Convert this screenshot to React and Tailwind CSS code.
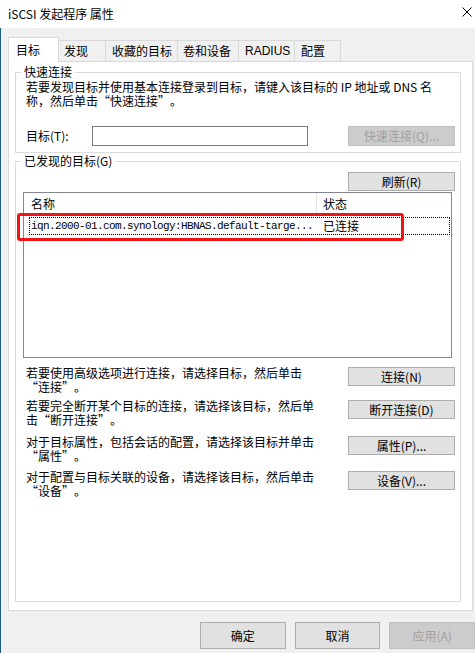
import React from 'react';

const Btn = ({ children, disabled }) => (
  <div
    className={
      disabled
        ? 'w-[107px] h-[20px] flex items-center justify-center border border-[#bfbfbf] bg-[#cccccc] text-[12px] leading-none text-[#a0a0a0]'
        : 'w-[107px] h-[19px] flex items-center justify-center border border-[#adadad] bg-[#e1e1e1] text-[12px] leading-none text-black'
    }
  >
    {children}
  </div>
);

const DlgBtn = ({ children, disabled }) => (
  <div
    className={
      disabled
        ? 'w-[86px] h-[27px] flex items-center justify-center border border-[#bfbfbf] bg-[#cccccc] text-[12px] text-[#a0a0a0]'
        : 'w-[86px] h-[27px] flex items-center justify-center border border-[#adadad] bg-[#e1e1e1] text-[12px] text-black'
    }
  >
    {children}
  </div>
);

const actions = [
  { lines: ['若要使用高级选项进行连接，请选择目标，然后单击', '“连接”。'], btn: '连接(N)', mt: 'mt-[8px]' },
  { lines: ['若要完全断开某个目标的连接，请选择该目标，然后单', '击“断开连接”。'], btn: '断开连接(D)', mt: 'mt-[5px]' },
  { lines: ['对于目标属性，包括会话的配置，请选择该目标并单击', '“属性”。'], btn: '属性(P)...', mt: 'mt-[8px]' },
  { lines: ['对于配置与目标关联的设备，请选择该目标，然后单击', '“设备”。'], btn: '设备(V)...', mt: 'mt-[7px]' },
];

export default function App() {
  return (
    <div
      lang="zh-CN"
      className="w-[475px] h-[653px] overflow-hidden bg-[#f0f0f0] text-black font-['Noto_Sans_CJK_SC','Liberation_Sans',sans-serif] [text-spacing-trim:space-all] flex flex-col"
    >
      {/* Title bar */}
      <div className="h-[28px] shrink-0 bg-white flex items-center justify-between pl-[8px] pr-[3px]">
        <span className="text-[12px] leading-none">iSCSI 发起程序 属性</span>
        <svg width="10" height="10" viewBox="0 0 10 10" className="mb-[4px]">
          <path d="M0.5 0.5 L9.5 9.5 M9.5 0.5 L0.5 9.5" stroke="#000" strokeWidth="1" fill="none" />
        </svg>
      </div>

      <div className="flex-1 border-l border-[#1b5e80] flex flex-col">
        {/* Tabs */}
        <div className="flex items-end h-[24px] mt-[9px] ml-[7px] text-[12px] leading-none">
          <div className="relative z-10 -mb-px h-[25px] w-[51px] bg-white border-l border-t border-r border-[#d9d9d9] flex items-center pl-[7px]">目标</div>
          <div className="h-[21px] w-[46px] border-t border-[#d9d9d9] flex items-center pl-[5px]">发现</div>
          <div className="h-[21px] w-[72px] border-t border-l border-[#d9d9d9] flex items-center pl-[6px]">收藏的目标</div>
          <div className="h-[21px] w-[61px] border-t border-l border-[#d9d9d9] flex items-center pl-[5px]">卷和设备</div>
          <div className="h-[21px] w-[56px] border-t border-l border-[#d9d9d9] flex items-center pl-[6px] font-['Liberation_Sans',sans-serif]">RADIUS</div>
          <div className="h-[21px] w-[47px] border-t border-l border-r border-[#d9d9d9] flex items-center pl-[6px]">配置</div>
        </div>

        {/* Tab panel */}
        <div className="ml-[7px] w-[465px] h-[550px] shrink-0 border border-[#d9d9d9] bg-white pt-[2px] text-[12px]">
          {/* Quick connect */}
          <fieldset className="ml-[6px] w-[446px] border border-[#dcdcdc] pb-[6px]">
            <legend className="ml-[5px] px-[3px] leading-[16px]">快速连接</legend>
            <p className="pl-[10px] leading-[14px] whitespace-nowrap">
              若要发现目标并使用基本连接登录到目标，请键入该目标的 IP 地址或 DNS 名
              <br />
              称，然后单击“快速连接”。
            </p>
            <div className="mt-[18px] flex items-center pl-[10px]">
              <span className="w-[66px] leading-none">目标(T):</span>
              <div className="w-[216px] h-[20px] border border-[#7a7a7a] bg-white" />
              <div className="ml-[40px]">
                <Btn disabled>快速连接(Q)...</Btn>
              </div>
            </div>
          </fieldset>

          {/* Discovered targets */}
          <fieldset className="ml-[6px] w-[446px] h-[449px] border border-[#dcdcdc]">
            <legend className="ml-[5px] px-[3px] leading-[16px]">已发现的目标(G)</legend>
            <div className="mt-[3px] flex justify-end pr-[5px]">
              <Btn>刷新(R)</Btn>
            </div>

            <div className="relative mt-[1px] ml-[7px] w-[429px] h-[166px] border border-[#828790] bg-white">
              <div className="flex h-[21px] leading-none">
                <div className="w-[293px] pl-[7px] flex items-center border-r border-[#e5e5e5]">名称</div>
                <div className="pl-[6px] flex items-center">状态</div>
              </div>
              <div className="mt-[3px] ml-[5px] w-[421px] h-[18px] border border-dotted border-black flex items-center leading-none">
                <div className="w-[293px] pl-[1px] font-['Liberation_Mono',monospace] text-[11px] tracking-[-0.6px] whitespace-nowrap">
                  iqn.2000-01.com.synology:HBNAS.default-targe...
                </div>
                <div>已连接</div>
              </div>
              <div className="absolute left-[-7px] top-[20px] w-[387px] h-[28px] border-[3px] border-[#f01414] rounded-[3px]" />
            </div>

            {actions.map((a) => (
              <div key={a.btn} className={`${a.mt} flex justify-between items-start pl-[10px] pr-[5px]`}>
                <div className="whitespace-nowrap">
                  <div className="leading-[14px]">{a.lines[0]}</div>
                  <div className="leading-[14px]">{a.lines[1]}</div>
                </div>
                <div className="mt-[1px]">
                  <Btn>{a.btn}</Btn>
                </div>
              </div>
            ))}
          </fieldset>
        </div>

        {/* Dialog buttons */}
        <div className="mt-[11px] pl-[199px] flex gap-[9px]">
          <DlgBtn>确定</DlgBtn>
          <DlgBtn>取消</DlgBtn>
          <DlgBtn disabled>应用(A)</DlgBtn>
        </div>
      </div>
    </div>
  );
}
